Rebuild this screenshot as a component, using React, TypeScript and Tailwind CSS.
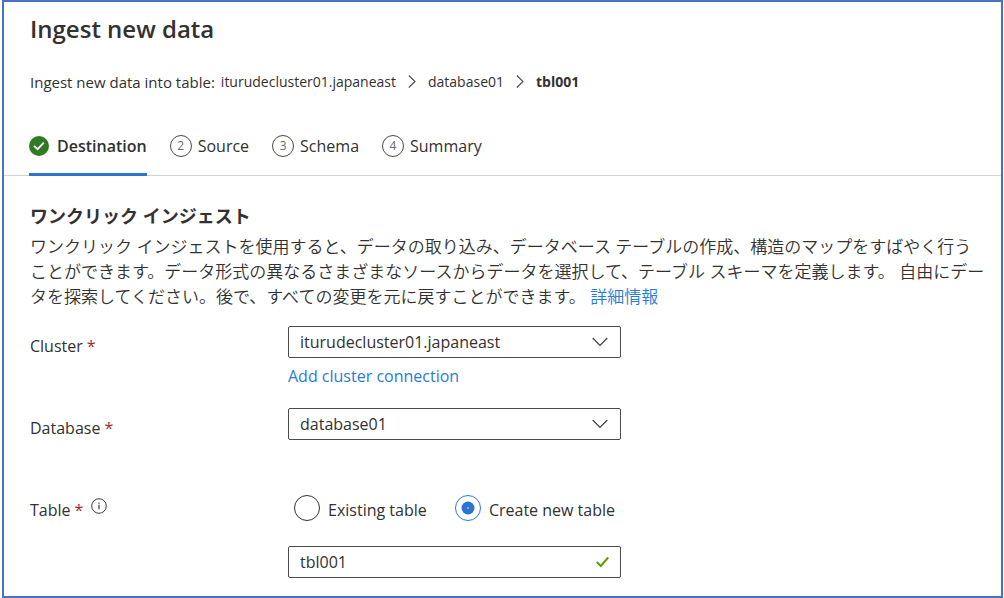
import { useState } from "react";
import type { ReactNode } from "react";

const steps = ["Destination", "Source", "Schema", "Summary"];

function CrumbArrow() {
  return (
    <svg className="h-4 w-2" viewBox="0 0 8 16" fill="none" stroke="#4a4a4a" strokeWidth="1.1" aria-hidden="true">
      <path d="M0.800 1.500 7 7.500l-6.200 6" />
    </svg>
  );
}

function DoneBadge() {
  return (
    <svg className="size-5 shrink-0" viewBox="0 0 20 20" aria-hidden="true">
      <circle cx="10" cy="10" r="10" fill="#2f7a22" />
      <path d="M5 9.800 8.600 13.200 14.800 6.600" fill="none" stroke="#fff" strokeWidth="1.700" />
    </svg>
  );
}

function InfoIcon() {
  return (
    <svg className="size-4" viewBox="0 0 16 16" fill="none" stroke="#3c3c3c" aria-hidden="true">
      <circle cx="8" cy="8" r="7.300" strokeWidth="1" />
      <path d="M8 6.800v4.400M8 4.400v1.300" strokeWidth="1.200" />
    </svg>
  );
}

function Required() {
  return <span className="ml-1 text-[#a4262c]">*</span>;
}

function Dropdown({ id, options }: { id: string; options: string[] }) {
  return (
    <div className="grid items-center">
      <select
        id={id}
        className="col-start-1 row-start-1 h-8 w-full appearance-none rounded-xs border border-[#4a4a4a] bg-white pr-10 pl-[11px] leading-6 text-[#323130]"
      >
        {options.map((o) => (
          <option key={o}>{o}</option>
        ))}
      </select>
      <svg
        className="pointer-events-none col-start-1 row-start-1 mr-[13px] h-4 w-4 justify-self-end"
        viewBox="0 0 16 16"
        fill="none"
        stroke="#3c3c3c"
        strokeWidth="1.200"
        aria-hidden="true"
      >
        <path d="M0.700 4 8 11.400 15.300 4" />
      </svg>
    </div>
  );
}

function Choice({ label, checked, onPick }: { label: string; checked: boolean; onPick: () => void }) {
  return (
    <label className="flex items-center gap-2">
      <span className="grid size-[26px] place-items-center">
        <input
          type="radio"
          name="table-mode"
          checked={checked}
          onChange={onPick}
          className="col-start-1 row-start-1 size-[26px] appearance-none rounded-full border border-[#323130] bg-white checked:border-[#2b7bd6]"
        />
        {checked && (
          <svg className="pointer-events-none col-start-1 row-start-1 size-[14px]" viewBox="0 0 14 14" aria-hidden="true">
            <circle cx="7" cy="7" r="6.500" fill="#2b74cf" />
            <circle cx="7" cy="7" r="0.700" fill="#fff" />
          </svg>
        )}
      </span>
      <span className="pt-1">{label}</span>
    </label>
  );
}

function Row({ label, children }: { label: ReactNode; children: ReactNode }) {
  return (
    <div className="flex">
      <div className="w-[258px] shrink-0 pt-2 leading-6">{label}</div>
      <div className="w-full max-w-[333px]">{children}</div>
    </div>
  );
}

export default function App() {
  const [mode, setMode] = useState("new");
  return (
    <div className="bg-white pr-px pl-[2px] font-['Open_Sans','Noto_Sans_CJK_JP',sans-serif] text-base text-[#323130]">
      <main className="min-h-[598px] border-2 border-[#4a72c4] pb-4">
        <header className="px-[26px] pt-[11px]">
          <h1 className="text-2xl leading-8 font-semibold">Ingest new data</h1>
          <div className="mt-[25px] flex items-center leading-6">
            <span className="text-[15px]">Ingest new data into table:</span>
            <nav aria-label="Breadcrumb" className="ml-1.5 flex items-center gap-3 text-sm leading-6">
              <a href="#cluster">iturudecluster01.japaneast</a>
              <CrumbArrow />
              <a href="#database">database01</a>
              <CrumbArrow />
              <a href="#table" className="font-bold">tbl001</a>
            </nav>
          </div>
        </header>
        <nav aria-label="Steps" className="mt-8 flex gap-[23px] border-b border-[#d2d2d2] px-[25px]">
          {steps.map((step, i) => (
            <button
              key={step}
              type="button"
              className={
                i === 0
                  ? "-mb-px flex h-[50px] items-center gap-2 border-b-3 border-[#2b74cf] pb-2 font-semibold"
                  : "flex h-[49px] items-center gap-1.5 pb-2.5"
              }
            >
              {i === 0 ? (
                <DoneBadge />
              ) : (
                <span className="grid size-[22px] place-items-center rounded-full border border-[#4a4a4a] text-xs text-[#6a6a6a]">
                  {i + 1}
                </span>
              )}
              <span>{step}</span>
            </button>
          ))}
        </nav>
        <section className="pr-2 pl-[26px] pt-7">
          <h2 className="text-lg leading-6 font-bold">ワンクリック インジェスト</h2>
          <p className="mt-1.5 text-[17px] leading-[25px] font-[350]">
            ワンクリック インジェストを使用すると、データの取り込み、データベース テーブルの作成、構造のマップをすばやく行う
            <br />
            ことができます。データ形式の異なるさまざまなソースからデータを選択して、テーブル スキーマを定義します。 自由にデー
            <br />
            タを探索してください。後で、すべての変更を元に戻すことができます。{" "}
            <a href="#details" className="text-[#2b7bd6]">詳細情報</a>
          </p>
          <form className="mt-[17px]">
            <Row label={<label htmlFor="cluster">Cluster<Required /></label>}>
              <Dropdown id="cluster" options={["iturudecluster01.japaneast"]} />
              <a href="#add" className="mt-1.5 block leading-6 text-[#2b7bd6]">Add cluster connection</a>
            </Row>
            <div className="mt-5">
              <Row label={<label htmlFor="database">Database<Required /></label>}>
                <Dropdown id="database" options={["database01"]} />
              </Row>
            </div>
            <div className="mt-[50px]">
              <Row
                label={
                  <div className="flex">
                    <label htmlFor="table">Table<Required /></label>
                    <button type="button" aria-label="About tables" className="ml-2 size-4">
                      <InfoIcon />
                    </button>
                  </div>
                }
              >
                <div className="flex justify-between px-1.5 pt-1">
                  <Choice label="Existing table" checked={mode === "existing"} onPick={() => setMode("existing")} />
                  <Choice label="Create new table" checked={mode === "new"} onPick={() => setMode("new")} />
                </div>
                <div className="mt-6 grid items-center">
                  <input
                    id="table"
                    type="text"
                    defaultValue="tbl001"
                    className="col-start-1 row-start-1 h-8 w-full rounded-xs border border-[#4a4a4a] pr-10 pl-[11px] leading-6"
                  />
                  <svg
                    className="pointer-events-none col-start-1 row-start-1 mr-3 h-3 w-[13px] justify-self-end"
                    viewBox="0 0 13 12"
                    fill="none"
                    stroke="#57a300"
                    strokeWidth="2"
                    aria-hidden="true"
                  >
                    <path d="M0.800 6 4.800 10 12.200 1.500" />
                  </svg>
                </div>
              </Row>
            </div>
          </form>
        </section>
      </main>
    </div>
  );
}
